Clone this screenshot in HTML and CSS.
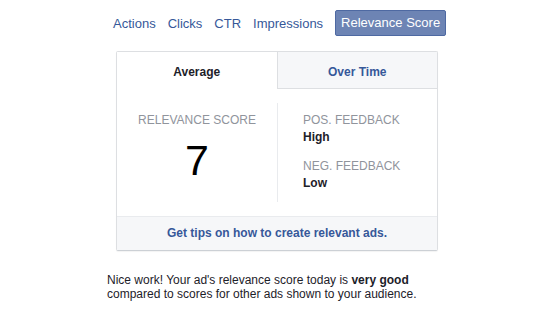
FILE: index.html
```html
<!DOCTYPE html>
<html lang="en">
  <head>
    <meta charset="UTF-8" />
    <title>Relevance Score</title>
    <link rel="stylesheet" href="styles.css">
  </head>
  <body>
    <div id="main">
      <nav class="metrics">
        <a href="#">Actions</a>
        <a href="#">Clicks</a>
        <a href="#">CTR</a>
        <a href="#">Impressions</a>
        <a href="#" class="selected">Relevance Score</a>
      </nav>

      <div class="card">
        <div class="tabs">
          <div class="tab active">Average</div>
          <div class="tab">Over Time</div>
        </div>
        <div class="score-body">
          <div class="score">
            <div class="label">RELEVANCE SCORE</div>
            <div class="big-number">7</div>
          </div>
          <div class="feedback">
            <div class="label">POS. FEEDBACK</div>
            <div class="value">High</div>
            <div class="label neg">NEG. FEEDBACK</div>
            <div class="value">Low</div>
          </div>
        </div>
        <a href="#" class="card-footer">Get tips on how to create relevant ads.</a>
      </div>

      <p class="summary">
        Nice work! Your ad's relevance score today is <b>very good</b>
        compared to scores for other ads shown to your audience.
      </p>
    </div>
  </body>
</html>
```

FILE: styles.css
```css
body {
  font-family: 'Liberation Sans', Arial, sans-serif;
  margin: 0;
  padding: 0;
  background-color: #fff;
  color: #1d2129;
}

#main {
  width: 345px;
  margin-left: 107px;
  padding-top: 10px;
}

.metrics {
  display: flex;
  align-items: center;
  gap: 12px;
  margin-left: 6px;
  font-size: 13px;
}

.metrics a {
  color: #365899;
  text-decoration: none;
}

.metrics a.selected {
  background-color: #6d84b4;
  border: 1px solid #4e69a2;
  border-radius: 2px;
  color: #fff;
  padding: 4px 5px 5px 5px;
}

.card {
  width: 320px;
  margin: 15px 0 0 9px;
  border: 1px solid #dddfe2;
  border-bottom-color: #ccd0d5;
  border-radius: 2px;
  box-shadow: 0 1px 1px rgba(0, 0, 0, 0.05);
}

.tabs {
  display: flex;
  height: 37px;
}

.tab {
  flex: 1;
  display: flex;
  align-items: center;
  justify-content: center;
  padding-top: 3px;
  font-size: 12px;
  font-weight: bold;
  color: #365899;
  background-color: #f6f7f9;
  border-left: 1px solid #dddfe2;
  border-bottom: 1px solid #dddfe2;
}

.tab.active {
  color: #1d2129;
  background-color: #fff;
  border: none;
}

.score-body {
  display: flex;
  height: 127px;
  align-items: center;
}

.score {
  width: 160px;
  text-align: center;
  align-self: flex-start;
  padding-top: 24px;
}

.label {
  font-size: 12px;
  color: #90949c;
}

.big-number {
  font-size: 43px;
  line-height: 1;
  margin-top: 12px;
  color: #000;
}

.feedback {
  border-left: 1px solid #e9ebee;
  height: 99px;
  padding-left: 25px;
  padding-top: 10px;
  box-sizing: border-box;
}

.value {
  font-size: 12px;
  font-weight: bold;
  margin-top: 3px;
}

.label.neg {
  margin-top: 15px;
}

.card-footer {
  display: block;
  background-color: #f6f7f9;
  border-top: 1px solid #e9ebee;
  height: 33px;
  line-height: 33px;
  text-align: center;
  font-size: 12px;
  font-weight: bold;
  color: #365899;
  text-decoration: none;
}

.summary {
  font-size: 12px;
  line-height: 14px;
  margin: 22px 0 0 0;
}
```
